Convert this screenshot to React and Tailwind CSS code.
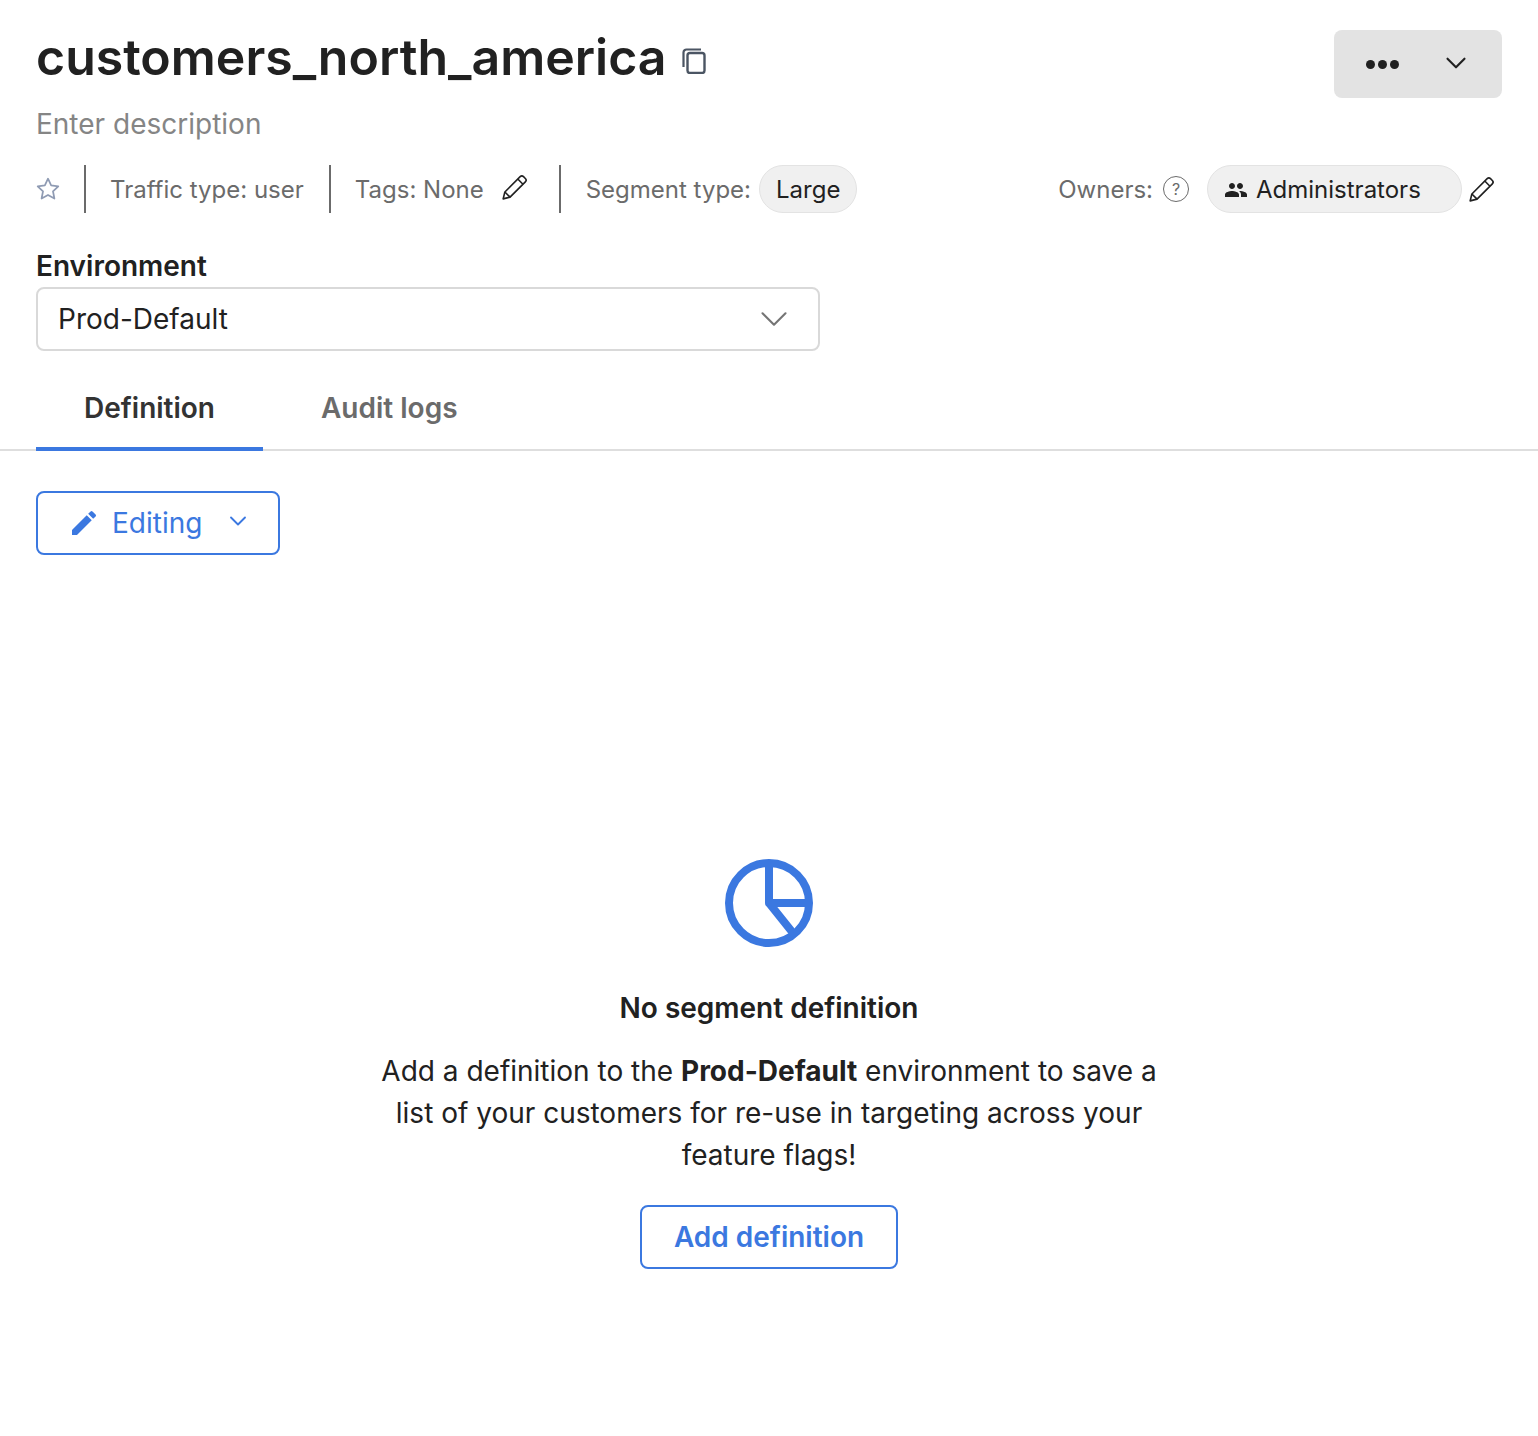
import React from 'react'
import { ChevronDown } from 'lucide-react'

function PencilOutline({ className }) {
  return (
    <svg viewBox="0 0 26 26" fill="none" stroke="currentColor" strokeWidth="1.5" strokeLinejoin="round" className={className}>
      <path d="M2 24l1.6-6.4L17.8 3.4a2.2 2.2 0 0 1 3.1 0l1.7 1.7a2.2 2.2 0 0 1 0 3.1L8.4 22.4z" />
      <path d="M15.6 5.6l4.8 4.8M3.6 17.6l4.8 4.8" />
    </svg>
  )
}

function CopyIcon({ className }) {
  return (
    <svg viewBox="0 0 24 26" fill="none" stroke="currentColor" className={className}>
      <rect x="5.5" y="5" width="17" height="20" rx="2.5" strokeWidth="2.4" />
      <path d="M1.5 19V4.5A3 3 0 0 1 4.5 1.5H19" strokeWidth="2.2" />
    </svg>
  )
}

function PeopleIcon({ className }) {
  return (
    <svg viewBox="0 0 24 24" fill="currentColor" className={className}>
      <path d="M16 11c1.66 0 2.99-1.34 2.99-3S17.66 5 16 5s-3 1.34-3 3 1.34 3 3 3zm-8 0c1.66 0 2.99-1.34 2.99-3S9.66 5 8 5 5 6.34 5 8s1.34 3 3 3zm0 2c-2.33 0-7 1.17-7 3.5V19h14v-2.5C15 14.17 10.33 13 8 13zm8 0c-.29 0-.62.02-.97.05 1.16.84 1.97 1.97 1.97 3.45V19h6v-2.5c0-2.33-4.67-3.5-7-3.5z" />
    </svg>
  )
}

function Divider() {
  return <div className="h-12 w-0.5 bg-[#6b6b6b]" />
}

export default function App() {
  return (
    <div className="min-h-[1436px] bg-white text-[#212121] font-['Inter',sans-serif]">
      <div className="px-9 pt-[30px]">
        {/* title + actions */}
        <div className="flex items-start justify-between">
          <div className="flex items-center h-[56px]">
            <h1 className="pb-0.5 text-[50px] leading-[56px] font-semibold">customers_north_america</h1>
            <CopyIcon className="ml-[15px] mt-[5px] w-6 h-[26px] text-[#4b5563]" />
          </div>
          <button className="flex items-center w-[168px] h-[68px] bg-[#e3e3e3] rounded-lg pl-8">
            <span className="flex gap-[3px]">
              <span className="w-[9px] h-[9px] rounded-full bg-[#212121]" />
              <span className="w-[9px] h-[9px] rounded-full bg-[#212121]" />
              <span className="w-[9px] h-[9px] rounded-full bg-[#212121]" />
            </span>
            <ChevronDown className="ml-[40px] -mt-0.5 w-[34px] h-[34px]" strokeWidth={1.5} />
          </button>
        </div>

        <p className="mt-[7px] text-[28px] leading-[38px] text-[#858585]">Enter description</p>

        {/* meta row */}
        <div className="flex items-center justify-between mt-[22px] h-12 text-[24px] text-[#6b6b6b]">
          <div className="flex items-center">
            <svg viewBox="0 0 24 24" fill="none" stroke="#8f9bb3" strokeWidth="1.6" strokeLinejoin="round" className="w-[26px] h-[26px] -ml-px mr-[23px]">
              <path d="M12 2.5l2.9 6.2 6.6.8-4.9 4.6 1.3 6.7L12 17.5l-5.9 3.3 1.3-6.7-4.9-4.6 6.6-.8z" />
            </svg>
            <Divider />
            <span className="pt-0.5 ml-6 mr-[25px]">Traffic type: user</span>
            <Divider />
            <span className="pt-0.5 ml-6">Tags: None</span>
            <PencilOutline className="ml-[17px] mr-[30px] -mt-1 w-[28px] h-[28px] text-[#212121]" />
            <Divider />
            <span className="pt-0.5 ml-[25px]">Segment type:</span>
            <span className="ml-2 pt-0.5 flex items-center h-12 px-4 rounded-full bg-[#f0f0f0] border border-[#e3e3e3] text-[#212121]">Large</span>
          </div>
          <div className="flex items-center mr-1.5">
            <span className="pt-0.5">Owners:</span>
            <span className="ml-[10px] flex items-center justify-center w-[26px] h-[26px] rounded-full border border-[#6b6b6b] text-[16px]">?</span>
            <span className="ml-[18px] pt-0.5 flex items-center w-[255px] h-12 pl-4 rounded-full bg-[#f0f0f0] border border-[#e3e3e3] text-[#212121]">
              <PeopleIcon className="w-6 h-6 mr-2" />
              Administrators
            </span>
            <PencilOutline className="ml-[6px] w-[28px] h-[28px] text-[#212121]" />
          </div>
        </div>

        {/* environment */}
        <label className="block mt-9 text-[28px] leading-[34px] font-semibold">Environment</label>
        <div className="flex items-center justify-between w-[784px] h-16 mt-1 pl-5 pr-[21px] border-2 border-[#d9d9d9] rounded-lg text-[28px]">
          <span>Prod-Default</span>
          <ChevronDown className="w-[46px] h-[46px] text-[#757575]" strokeWidth={1.1} />
        </div>
      </div>

      {/* tabs */}
      <div className="flex mt-[16px] pl-9 h-[84px] border-b-2 border-[#dedede] text-[28px] font-semibold">
        <div className="flex items-center justify-center w-[227px] h-[84px] pt-0.5 text-[#333333] border-b-4 border-[#3b78e0]">Definition</div>
        <div className="flex items-center ml-[58px] h-[82px] text-[#6b6b6b]">Audit logs</div>
      </div>

      <div className="px-9 pt-[40px]">
        <button className="flex items-center w-[244px] h-16 pl-[30px] border-2 border-[#3b78e0] rounded-lg text-[#3b78e0] text-[28px]">
          <svg viewBox="0 0 24 24" fill="currentColor" className="w-8 h-8 mr-3">
            <path d="M3 17.25V21h3.75L17.81 9.94l-3.75-3.75L3 17.25zM20.71 7.04a1 1 0 0 0 0-1.41l-2.34-2.34a1 1 0 0 0-1.41 0l-1.83 1.83 3.75 3.75 1.83-1.83z" />
          </svg>
          Editing
          <ChevronDown className="ml-[22px] -mt-1 w-7 h-7" strokeWidth={1.6} />
        </button>
      </div>

      {/* empty state */}
      <div className="flex flex-col items-center mt-[304px] text-center">
        <svg viewBox="0 0 88 88" fill="none" stroke="#3b78e0" strokeWidth="8" className="w-[88px] h-[88px]">
          <circle cx="44" cy="44" r="40" />
          <path d="M44 4v40h40M44 44l24 30" strokeLinejoin="round" />
        </svg>
        <h2 className="mt-[43px] text-[28px] leading-[36px] font-semibold">No segment definition</h2>
        <p className="mt-6 w-[800px] text-[28px] leading-[42px]">
          Add a definition to the <strong className="font-bold">Prod-Default</strong> environment to save a<br />
          list of your customers for re-use in targeting across your<br />
          feature flags!
        </p>
        <button className="mt-[29px] w-[258px] h-16 border-2 border-[#3b78e0] rounded-lg text-[#3b78e0] text-[28px] font-semibold">Add definition</button>
      </div>
    </div>
  )
}
